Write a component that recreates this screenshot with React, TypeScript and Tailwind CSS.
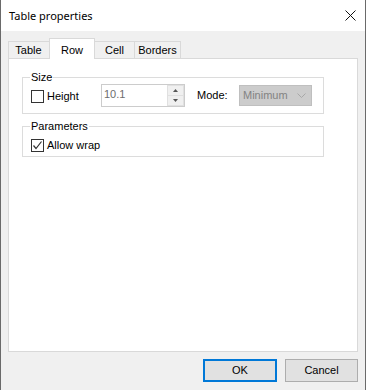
import React from "react";

const body = { fontFamily: '"Liberation Sans", Arial, sans-serif' };
const title = { fontFamily: '"Noto Sans", "Open Sans", sans-serif' };

function CheckBox({ checked }: { checked?: boolean }) {
  return (
    <div className="w-[13px] h-[13px] border border-[#333333] bg-white flex items-center justify-center shrink-0">
      {checked && (
        <svg width="11" height="11" viewBox="0 0 11 11">
          <polyline points="1.5,5.5 4,8.5 9.5,1.5" fill="none" stroke="#333333" strokeWidth="1.2" />
        </svg>
      )}
    </div>
  );
}

export default function App() {
  return (
    <div className="w-[366px] h-[390px] flex flex-col border-x border-[#6a6a6a] text-[11px] text-black" style={body}>
      <div className="h-[31px] bg-white flex items-center justify-between pl-[8px] pr-[9px] shrink-0">
        <span className="text-[11px] pt-px" style={title}>Table properties</span>
        <svg width="11" height="11" viewBox="0 0 11 11">
          <path d="M0.5 0.5 L10.5 10.5 M10.5 0.5 L0.5 10.5" stroke="#111" strokeWidth="1" />
        </svg>
      </div>
      <div className="flex-1 bg-[#f0f0f0] flex flex-col px-[7px] pt-[7px] pb-[8px]">
        <div className="h-[20px] flex items-end shrink-0">
          <div className="w-[41px] h-[17px] border-l border-t border-[#d9d9d9] flex items-center justify-center pr-[1px]">Table</div>
          <div className="relative z-10 w-[46px] h-[21px] -mb-px bg-white border-l border-t border-r border-[#d9d9d9] flex items-start justify-center pt-[3px]">Row</div>
          <div className="w-[40px] h-[17px] border-t border-r border-[#d9d9d9] flex items-center justify-center">Cell</div>
          <div className="w-[46px] h-[17px] border-t border-r border-[#d9d9d9] flex items-center justify-center">Borders</div>
        </div>
        <div className="flex-1 bg-white border border-[#d9d9d9] pl-[13px] pt-[18px]">
          <div className="relative w-[302px] h-[37px] border border-[#dcdcdc] flex items-center pl-[8px]">
            <span className="absolute left-[7px] -top-[7px] bg-white px-px leading-[13px]">Size</span>
            <div className="w-[70px] flex items-center gap-[3px] pt-[2px]">
              <CheckBox />
              <span>Height</span>
            </div>
            <div className="w-[84px] h-[23px] border border-[#cccccc] bg-white flex items-center">
              <span className="flex-1 pl-[2px] text-[#6d6d6d] -mt-[2px]">10.1</span>
              <div className="w-[17px] h-full flex flex-col">
                <div className="flex-1 bg-[#f0f0f0] border border-[#e0e0e0] flex items-center justify-center">
                  <svg width="5" height="3" viewBox="0 0 5 3"><path d="M0 3 L2.5 0 L5 3 Z" fill="#555" /></svg>
                </div>
                <div className="flex-1 bg-[#f0f0f0] border border-[#e0e0e0] border-t-0 flex items-center justify-center">
                  <svg width="5" height="3" viewBox="0 0 5 3"><path d="M0 0 L2.5 3 L5 0 Z" fill="#555" /></svg>
                </div>
              </div>
            </div>
            <span className="w-[42px] ml-[12px]">Mode:</span>
            <div className="w-[73px] h-[21px] bg-[#cccccc] border border-[#bfbfbf] flex items-center justify-between pl-[3px] pr-[5px] text-[#838383]">
              <span>Minimum</span>
              <svg width="9" height="5" viewBox="0 0 9 5">
                <polyline points="0.5,0.5 4.5,4.5 8.5,0.5" fill="none" stroke="#a8a8a8" strokeWidth="1" />
              </svg>
            </div>
          </div>
          <div className="relative w-[302px] h-[31px] mt-[12px] border border-[#dcdcdc] flex items-start pl-[8px] pt-[10px]">
            <span className="absolute left-[7px] -top-[7px] bg-white px-px leading-[13px]">Parameters</span>
            <div className="flex items-center gap-[3px]">
              <CheckBox checked />
              <span>Allow wrap</span>
            </div>
          </div>
        </div>
        <div className="mt-[7px] h-[23px] flex justify-end gap-[8px] shrink-0">
          <div className="w-[74px] h-[23px] border-2 border-[#0078d7] bg-[#e1e1e1] flex items-center justify-center">OK</div>
          <div className="w-[73px] h-[23px] border border-[#adadad] bg-[#e1e1e1] flex items-center justify-center">Cancel</div>
        </div>
      </div>
    </div>
  );
}
